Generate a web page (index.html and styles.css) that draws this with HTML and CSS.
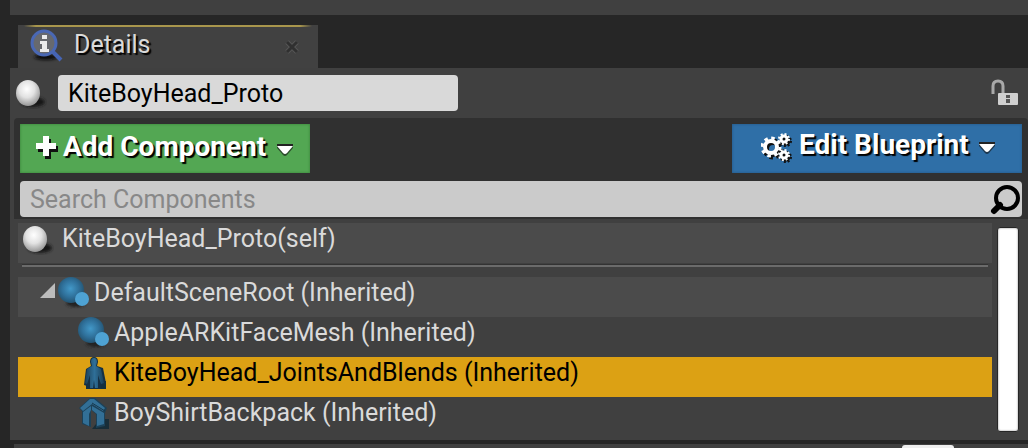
FILE: index.html
```html
<!DOCTYPE html>
<html lang="en">
<head>
    <meta charset="UTF-8">
    <meta name="viewport" content="width=device-width, initial-scale=1.0">
    <title>Details</title>
    <link rel="stylesheet" href="styles.css">
</head>
<body>
    <!-- shared icons -->
    <svg class="defs" width="0" height="0" aria-hidden="true">
        <defs>
            <radialGradient id="white-ball" cx="45%" cy="35%" r="65%">
                <stop offset="0" stop-color="#ffffff"/>
                <stop offset="0.5" stop-color="#e2e2e2"/>
                <stop offset="1" stop-color="#969696"/>
            </radialGradient>
            <radialGradient id="blue-ball" cx="48%" cy="45%" r="55%">
                <stop offset="0" stop-color="#4298c8"/>
                <stop offset="0.6" stop-color="#2f709a"/>
                <stop offset="1" stop-color="#245370"/>
            </radialGradient>
            <linearGradient id="figure" x1="0" x2="1">
                <stop offset="0" stop-color="#1b4058"/>
                <stop offset="0.5" stop-color="#2f6f98"/>
                <stop offset="1" stop-color="#1b4058"/>
            </linearGradient>
            <filter id="soft" x="-30%" y="-50%" width="160%" height="200%">
                <feGaussianBlur stdDeviation="1.5"/>
            </filter>
            <symbol id="actor" viewBox="0 0 32 32">
                <ellipse cx="18" cy="25" rx="12" ry="5" fill="#151515" filter="url(#soft)"/>
                <ellipse cx="13" cy="16" rx="12" ry="13" fill="url(#white-ball)"/>
            </symbol>
            <symbol id="scene" viewBox="0 0 32 32">
                <ellipse cx="18" cy="26" rx="10" ry="4" fill="#202020" filter="url(#soft)"/>
                <circle cx="13" cy="13" r="13" fill="url(#blue-ball)"/>
                <circle cx="24" cy="22" r="7" fill="#4ea2d3"/>
            </symbol>
            <symbol id="caret" viewBox="0 0 18 14">
                <path d="M1 2h16v3l-6 7q-2 2-4 0L1 5z" fill="#111" opacity="0.6"/>
                <path d="M1 3h16l-6 7q-2 2-4 0z" fill="#fff"/>
                <path d="M1 1h16v2H1z" fill="#222"/>
            </symbol>
            <symbol id="gear-set" viewBox="0 0 32 30">
                <g fill="none" stroke="currentColor">
                    <circle cx="10" cy="14" r="6" stroke-width="4"/>
                    <circle cx="10" cy="14" r="9" stroke-width="3" stroke-dasharray="3.530 3.530"/>
                    <circle cx="23" cy="6" r="3" stroke-width="3"/>
                    <circle cx="23" cy="6" r="5" stroke-width="2" stroke-dasharray="1.960 1.960"/>
                    <circle cx="23" cy="22" r="3" stroke-width="3"/>
                    <circle cx="23" cy="22" r="5" stroke-width="2" stroke-dasharray="1.960 1.960"/>
                </g>
            </symbol>
        </defs>
    </svg>

    <div class="top-strip"></div>

    <div class="tab-bar">
        <div class="tab">
            <svg class="tab-icon" viewBox="0 0 34 34">
                <ellipse cx="16" cy="28" rx="12" ry="3" fill="#111" filter="url(#soft)"/>
                <path d="M22 22l9 9" stroke="#4564b4" stroke-width="4"/>
                <circle cx="14" cy="14" r="12" fill="#67696e" stroke="#4a68b4" stroke-width="3"/>
                <path d="M12 6h5v4h-5zM10 12h7v8h2v3h-9v-3h2v-5h-2z" fill="#ececec"/>
            </svg>
            <span class="tab-label">Details</span>
            <button class="tab-close" aria-label="Close">
                <svg width="14" height="14" viewBox="0 0 14 14">
                    <path d="M2 2l10 10M12 2L2 12" stroke="#555" stroke-width="5"/>
                    <path d="M2 2l10 10M12 2L2 12" stroke="#303030" stroke-width="3"/>
                </svg>
            </button>
        </div>
    </div>

    <div class="panel">
        <div class="name-row">
            <svg class="actor-icon"><use href="#actor"/></svg>
            <input class="name-input" type="text" aria-label="Actor name" value="KiteBoyHead_Proto">
            <button class="lock" aria-label="Lock selection">
                <svg width="28" height="28" viewBox="0 0 28 28">
                    <path d="M2 15V7q0-5 5-5t5 5v8" fill="none" stroke="#a9a9a9" stroke-width="3"/>
                    <rect x="7" y="14" width="20" height="12" rx="1" fill="#d0d0d0"/>
                    <path d="M15 16h4v3h-4zM15 20h4v4h-4z" fill="#555"/>
                </svg>
            </button>
        </div>

        <div class="tools">
            <div class="buttons">
                <button class="btn add">
                    <svg class="plus" viewBox="0 0 24 24">
                        <path d="M10 4h6v7h7v6h-7v7h-6v-7H3v-6h7z" fill="#111"/>
                        <path d="M8 1h6v7h7v6h-7v7H8v-7H1V8h7z" fill="#fff"/>
                    </svg>
                    <span>Add Component</span>
                    <svg class="caret"><use href="#caret"/></svg>
                </button>
                <button class="btn edit">
                    <svg class="gears" viewBox="0 0 34 32">
                        <use href="#gear-set" x="2" y="2" width="32" height="30" color="#111"/>
                        <use href="#gear-set" width="32" height="30" color="#fff"/>
                    </svg>
                    <span>Edit Blueprint</span>
                    <svg class="caret"><use href="#caret"/></svg>
                </button>
            </div>
            <div class="search">
                <input type="text" aria-label="Search Components" placeholder="Search Components">
                <svg class="search-icon" viewBox="0 0 32 32">
                    <path d="M10 22l-6 6" stroke="#000" stroke-width="6" stroke-linecap="round"/>
                    <circle cx="17" cy="15" r="11" fill="none" stroke="#000" stroke-width="4"/>
                </svg>
            </div>
        </div>

        <div class="tree">
            <ul class="rows">
                <li class="row self">
                    <svg class="actor-icon"><use href="#actor"/></svg>
                    <span>KiteBoyHead_Proto(self)</span>
                </li>
                <li class="divider" role="separator"></li>
                <li class="row root">
                    <svg class="arrow" viewBox="0 0 15 15"><path d="M15 0v15H0z" fill="#bcbcbc"/></svg>
                    <svg class="icon"><use href="#scene"/></svg>
                    <span>DefaultSceneRoot (Inherited)</span>
                </li>
                <li class="row child">
                    <svg class="icon"><use href="#scene"/></svg>
                    <span>AppleARKitFaceMesh (Inherited)</span>
                </li>
                <li class="row child selected">
                    <svg class="icon" viewBox="0 0 32 32">
                        <path d="M20 24h8v8H8v-4z" fill="#14303d"/>
                        <path d="M16 0q4 0 4 5l-1 4 6 2 3 15-5 3v3H9v-3l-3-1 2-16 5-3-1-4q0-5 4-5z" fill="#153044"/>
                        <path d="M16 1q3 0 3 4l-1 4 5 3 3 14-3 1-3-9v13h-3l-1-8-1 8h-3V18l-3 9-2-1 2-14 5-3-1-4q0-4 3-4z" fill="url(#figure)"/>
                    </svg>
                    <span>KiteBoyHead_JointsAndBlends (Inherited)</span>
                </li>
                <li class="row child">
                    <svg class="icon" viewBox="0 0 32 32">
                        <path d="M22 22h9v10H14z" fill="#182d38"/>
                        <path d="M1 11L12 1h5l12 10-2 5v13l-9 2V17l-5-4v17l-9-3V14z" fill="#1c4158"/>
                        <path d="M2 11L12 2h4l11 9-2 3-11-7-9 7zM5 15l8-6v4l-2 4v12l-6-3zM14 9l12 7v11l-7 2V17l-5-4z" fill="#326f96"/>
                        <path d="M14 6l13 8" stroke="#17384d" stroke-width="1"/>
                    </svg>
                    <span>BoyShirtBackpack (Inherited)</span>
                </li>
            </ul>
            <div class="scrollbar"></div>
        </div>
    </div>

    <div class="next-section">
        <div class="next-thumb"></div>
    </div>
</body>
</html>
```
FILE: styles.css
```css
* {
    box-sizing: border-box;
}

body {
    margin: 0;
    padding-left: 10px;
    background-color: #262626;
    color: #dadada;
    font-family: Roboto, "Liberation Sans", sans-serif;
    font-size: 25px;
    line-height: 32px;
    overflow: hidden;
}

svg {
    display: block;
    flex: none;
}

button {
    margin: 0;
    padding: 0;
    border: 0;
    background: none;
    font: inherit;
    color: inherit;
}

input {
    border: 0;
    outline: 0;
    font: inherit;
    color: #000;
}

.defs {
    position: absolute;
}

.top-strip {
    height: 15px;
    background-color: #404040;
}

.tab-bar {
    padding: 10px 8px 0;
}

.tab {
    display: flex;
    align-items: flex-start;
    width: 300px;
    height: 43px;
    padding: 4px 19px 0 12px;
    background: linear-gradient(90deg, transparent 2%, #a8964c 6%, #a8964c 94%, transparent 98%) top / 100% 2px no-repeat #414141;
}

.tab-icon {
    width: 34px;
    height: 34px;
}

.tab-label {
    flex: 1;
    margin-left: 10px;
    text-shadow: 2px 2px 1px #000;
}

.tab-close {
    margin-top: 11px;
}

.panel {
    background-color: #404040;
}

.name-row {
    display: flex;
    align-items: center;
    padding: 7px 9px 7px 5px;
}

.actor-icon {
    width: 32px;
    height: 32px;
}

.name-input {
    width: 400px;
    height: 36px;
    margin-left: 11px;
    padding: 0 10px;
    border-radius: 4px;
    background-color: #d9d9d9;
}

.lock {
    margin-left: auto;
}

.tools {
    margin-left: 4px;
    padding: 6px 6px 2px;
    border-radius: 4px 4px 0 0;
    background-color: #303030;
}

.buttons {
    display: flex;
    justify-content: space-between;
}

.btn {
    display: flex;
    align-items: center;
    width: 290px;
    height: 49px;
    color: #fff;
    font-size: 28px;
    font-weight: bold;
    text-shadow: 2px 2px 1px #000;
    white-space: nowrap;
}

.add {
    padding: 0 16px 4px 15px;
    background-color: #53a753;
    box-shadow: inset 0 0 3px #377c38;
}

.edit {
    padding: 0 26px 8px 29px;
    background-color: #2f6fa7;
    box-shadow: inset 0 0 3px #235580;
}

.plus {
    width: 24px;
    height: 24px;
    margin-right: 4px;
}

.gears {
    width: 34px;
    height: 32px;
    margin: 8px 4px 0 0;
}

.caret {
    width: 18px;
    height: 14px;
    margin: 6px 0 0 auto;
}

.search {
    display: flex;
    align-items: center;
    height: 36px;
    margin-top: 8px;
    border-radius: 4px;
    background-color: #cbcbcb;
}

.search input {
    flex: 1;
    min-width: 0;
    height: 36px;
    padding: 0 10px;
    background: none;
}

.search input::placeholder {
    color: #888;
    opacity: 1;
}

.search-icon {
    width: 32px;
    height: 32px;
}

.tree {
    display: flex;
    padding: 4px 9px 3px 8px;
}

.rows {
    flex: 1;
    margin: 0;
    padding: 0;
    list-style: none;
}

.row {
    display: flex;
    height: 40px;
    white-space: nowrap;
}

.self {
    gap: 8px;
    padding-left: 4px;
    background-color: #4b4b4b;
}

.divider {
    height: 14px;
    padding-top: 1px;
}

.divider::before {
    content: "";
    display: block;
    height: 2px;
    margin: 0 4px;
    border-top: 1px solid #333;
    background-color: #6b6b6b;
}

.root {
    padding-left: 22px;
    background-color: #4b4b4b;
}

.child {
    padding-left: 60px;
}

.selected {
    background-color: #dca114;
    color: #000;
}

.arrow {
    width: 15px;
    height: 15px;
    margin: 6px 3px 0 0;
}

.icon {
    width: 32px;
    height: 32px;
    margin-right: 4px;
}

.scrollbar {
    width: 22px;
    margin: 4px 0 5px 5px;
    border: 1px solid #262626;
    border-radius: 3px;
    background-color: #fff;
    box-shadow: inset 0 0 2px #777;
}

.next-section {
    height: 8px;
    margin-left: 4px;
    padding: 1px 74px 0 0;
    border-top: 4px solid #262626;
    background-color: #404040;
}

.next-thumb {
    width: 52px;
    height: 3px;
    margin-left: auto;
    border-radius: 3px 3px 0 0;
    background-color: #eee;
}
```
